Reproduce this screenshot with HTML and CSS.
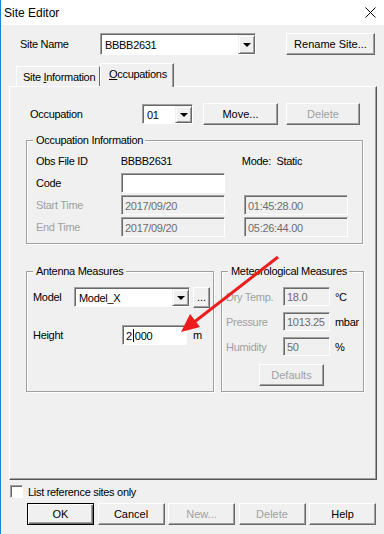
FILE: index.html
```html
<!DOCTYPE html>
<html lang="en">
<head>
    <meta charset="UTF-8">
    <title>Site Editor</title>
    <link rel="stylesheet" href="styles.css">
</head>
<body>
<div class="window">
    <div class="titlebar">
        <span class="title">Site Editor</span>
        <svg class="close" width="11" height="11" viewBox="0 0 11 11">
            <path d="M0.5 0.5 L10.5 10.5 M10.5 0.5 L0.5 10.5" stroke="#000" stroke-width="1" fill="none"/>
        </svg>
    </div>

    <div class="content">
        <div class="site-row">
            <span class="site-label">Site Name</span>
            <div class="combo site-combo">
                <span class="combo-text">BBBB2631</span>
                <span class="drop"><i class="tri"></i></span>
            </div>
            <button class="btn rename">Rename Site...</button>
        </div>

        <div class="tabs">
            <div class="tab"><span>Site <u>I</u>nformation</span></div>
            <div class="tab active"><span><u>O</u>ccupations</span></div>
        </div>

        <div class="panel">
            <div class="occ-row">
                <span class="occ-label">Occupation</span>
                <div class="combo occ-combo">
                    <span class="combo-text">01</span>
                    <span class="drop"><i class="tri"></i></span>
                </div>
                <button class="btn move">Move...</button>
                <button class="btn del" disabled>Delete</button>
            </div>

            <fieldset class="group info-group">
                <legend>Occupation Information</legend>
                <div class="info">
                    <div class="row">
                        <span class="lbl">Obs File ID</span>
                        <span class="val">BBBB2631</span>
                        <span class="val">Mode:&nbsp; Static</span>
                    </div>
                    <div class="row">
                        <span class="lbl">Code</span>
                        <span class="field wide"></span>
                    </div>
                    <div class="row">
                        <span class="lbl off">Start Time</span>
                        <span class="field wide dis">2017/09/20</span>
                        <span class="field wide dis second">01:45:28.00</span>
                    </div>
                    <div class="row">
                        <span class="lbl off">End Time</span>
                        <span class="field wide dis">2017/09/20</span>
                        <span class="field wide dis second">05:26:44.00</span>
                    </div>
                </div>
            </fieldset>

            <div class="groups">
                <fieldset class="group antenna">
                    <legend>Antenna Measures</legend>
                    <div class="ant">
                        <div class="ant-row">
                            <span class="ant-label">Model</span>
                            <div class="combo model-combo">
                                <span class="combo-text">Model_X</span>
                                <span class="drop"><i class="tri"></i></span>
                            </div>
                            <button class="btn dots">...</button>
                        </div>
                        <div class="ant-row height-row">
                            <span class="ant-label long">Height</span>
                            <span class="field height">2<i class="caret"></i>000</span>
                            <span class="unit">m</span>
                        </div>
                    </div>
                </fieldset>

                <fieldset class="group met">
                    <legend>Meteorological Measures</legend>
                    <div class="met-body">
                        <div class="met-row">
                            <span class="met-label">Dry Temp.</span>
                            <span class="field small dis">18.0</span>
                            <span class="unit">&deg;C</span>
                        </div>
                        <div class="met-row">
                            <span class="met-label">Pressure</span>
                            <span class="field small dis">1013.25</span>
                            <span class="unit">mbar</span>
                        </div>
                        <div class="met-row">
                            <span class="met-label">Humidity</span>
                            <span class="field small dis">50</span>
                            <span class="unit">%</span>
                        </div>
                        <button class="btn defaults" disabled>Defaults</button>
                    </div>
                </fieldset>
            </div>
        </div>

        <div class="check-row">
            <span class="checkbox"></span>
            <span>List reference sites only</span>
        </div>

        <div class="buttons">
            <button class="btn bottom default">OK</button>
            <button class="btn bottom">Cancel</button>
            <button class="btn bottom" disabled>New...</button>
            <button class="btn bottom" disabled>Delete</button>
            <button class="btn bottom">Help</button>
        </div>
    </div>

    <!-- annotation arrow -->
    <svg class="arrow" width="384" height="534" viewBox="0 0 384 534">
        <line x1="278" y1="257" x2="193" y2="323" stroke="#ee1c1c" stroke-width="3"/>
        <polygon points="181,332 200,327 190,314" fill="#ee1c1c"/>
    </svg>
</div>
</body>
</html>
```

FILE: styles.css
```css
* { box-sizing: border-box; }
body { margin: 0; background: #f0f0f0; font-family: "Liberation Sans", Arial, sans-serif; font-size: 11px; letter-spacing: -0.3px; color: #000; }
.window { position: relative; width: 384px; height: 534px; background: #f0f0f0; border-left: 1px solid #1883d7; overflow: hidden; }

.titlebar { height: 25px; background: #fff; display: flex; align-items: center; justify-content: space-between; padding: 0 8px 0 3px; }
.title { font-size: 12px; letter-spacing: 0; }
.close { display: block; }

.content { padding: 8px 7px 0 8px; }

/* 3d look */
.btn { font: inherit; color: #000; background: #f0f0f0; height: 22px; padding: 0; border: 1px solid; border-color: #fff #696969 #696969 #fff; box-shadow: inset -1px -1px #a0a0a0; }
.btn:disabled { color: #a0a0a0; }
.btn.default { border-color: #000; box-shadow: inset 1px 1px #fff, inset -1px -1px #696969, inset -2px -2px #a0a0a0; }
.field, .combo { background: #fff; border: 1px solid; border-color: #a0a0a0 #fff #fff #a0a0a0; box-shadow: inset 1px 1px #696969; }
.field { display: flex; align-items: center; height: 20px; padding: 1px 0 0 3px; }
.field.dis { background: #f0f0f0; color: #6d6d6d; }

.combo { display: flex; align-items: stretch; padding: 1px 0 0 1px; }
.combo-text { flex: 1; display: flex; align-items: center; padding-left: 3px; }
.drop { width: 17px; display: flex; align-items: center; justify-content: center; background: #f0f0f0; border: 1px solid; border-color: #f0f0f0 #696969 #696969 #f0f0f0; box-shadow: inset 1px 1px #fff, inset -1px -1px #a0a0a0; }
.tri { display: block; width: 0; height: 0; border-left: 4px solid transparent; border-right: 4px solid transparent; border-top: 4px solid #000; margin-top: 1px; }

.site-row { display: flex; align-items: center; height: 22px; padding-left: 11px; }
.site-label { width: 80px; }
.site-combo { width: 156px; height: 22px; }
.rename { width: 89px; margin-left: auto; margin-right: 2px; }

.tabs { display: flex; align-items: flex-end; height: 23px; margin-top: 8px; padding-left: 7px; }
.tab { height: 20px; width: 84px; display: flex; align-items: center; padding-left: 6px; border: 1px solid; border-bottom: none; border-color: #fff #696969 #fff #fff; }
.tab.active { position: relative; z-index: 1; height: 24px; width: 74px; margin-bottom: -1px; padding: 0 0 3px 8px; background: #f0f0f0; border-left-color: #fff; box-shadow: inset -1px 0 #a0a0a0; }

.panel { height: 394px; padding: 16px 0 0 16px; border: 1px solid; border-color: #fff #555 #555 #fff; box-shadow: inset -1px -1px #a0a0a0; }

.occ-row { display: flex; align-items: center; height: 22px; padding-left: 4px; }
.occ-label { width: 112px; }
.occ-combo { width: 51px; height: 20px; }
.move { width: 75px; margin-left: 10px; }
.del { width: 74px; margin-left: 8px; }

.group { margin: 0; padding: 0; min-width: 0; border: 1px solid #a0a0a0; box-shadow: 1px 1px #fff, inset 1px 1px #fff; }
.group legend { margin-left: 6px; padding: 0 2px 0 3px; line-height: 13px; background: #f0f0f0; }

.info-group { width: 337px; margin-top: 9px; }
.info { padding: 3px 0 5px 9px; }
.row { display: flex; align-items: center; height: 22px; }
.lbl { width: 85px; }
.lbl.off, .met-label { color: #a0a0a0; }
.val { width: 123px; padding-left: 1px; }
.wide { width: 104px; }
.second { margin-left: 19px; }

.groups { display: flex; gap: 7px; height: 127px; margin-top: 21px; }
.antenna { width: 188px; }
.met { width: 143px; }

.ant { padding: 9px 0 0 6px; }
.ant-row { display: flex; align-items: center; height: 20px; }
.ant-label { width: 41px; }
.ant-label.long { width: 89px; }
.model-combo { width: 116px; height: 20px; }
.dots { width: 17px; height: 21px; margin-left: 3px; }
.height-row { margin-top: 18px; }
.height { width: 65px; }
.caret { display: inline-block; width: 1px; height: 13px; background: #000; margin: 0 1px; }
.unit { margin-left: 6px; }

.met-body { padding: 9px 0 0 4px; }
.met-row { display: flex; align-items: center; height: 19px; margin-bottom: 6px; }
.met-label { width: 57px; }
.small { width: 47px; height: 19px; }
.met-row .unit { margin-left: 5px; }
.defaults { width: 65px; margin: 2px 0 0 33px; }

.check-row { display: flex; align-items: center; height: 13px; margin-top: 5px; padding-left: 1px; }
.checkbox { width: 13px; height: 13px; margin-right: 5px; background: #fff; border: 1px solid; border-color: #a0a0a0 #fff #fff #a0a0a0; box-shadow: inset 1px 1px #696969; }

.buttons { display: flex; gap: 3.5px; margin-top: 5px; padding-left: 18px; }
.bottom { width: 67px; }

.arrow { position: absolute; left: -1px; top: 0; pointer-events: none; }
```
